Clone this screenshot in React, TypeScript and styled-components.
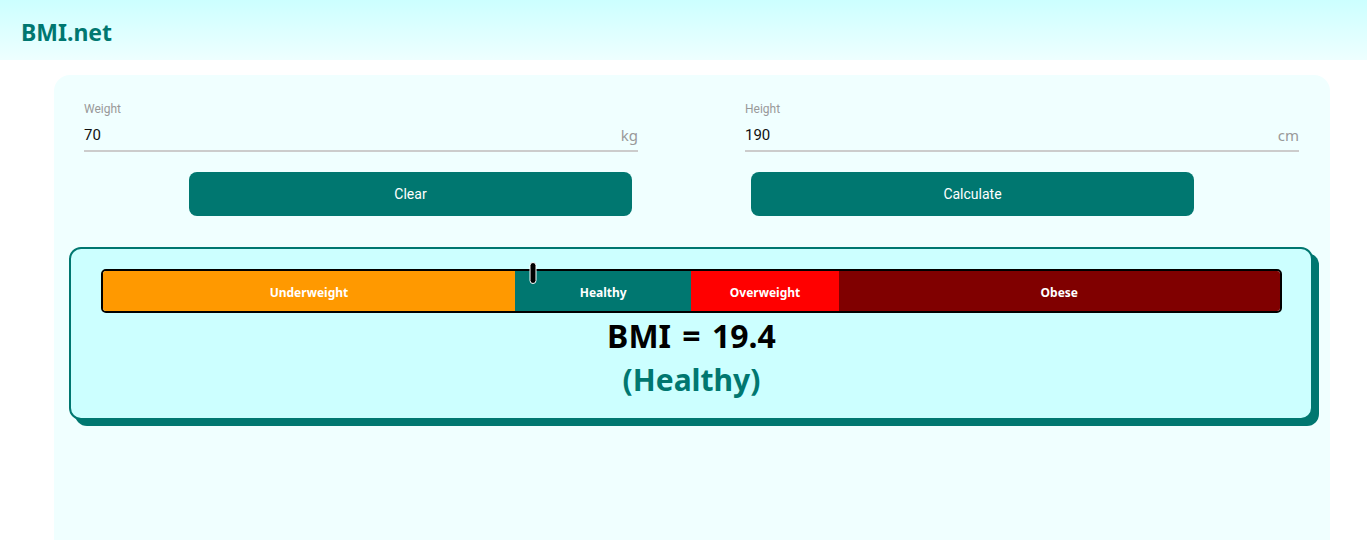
import styled, { createGlobalStyle } from 'styled-components';

const GlobalStyle = createGlobalStyle`
  html, body {
    margin: 0;
    padding: 0;
    background: #ffffff;
    font-family: "Noto Sans", "Open Sans", sans-serif;
  }
`;

const Header = styled.header`
  height: 60px;
  display: flex;
  align-items: center;
  padding-left: 21px;
  background: linear-gradient(to bottom, #ccffff, #eeffff);
`;

const Logo = styled.h1`
  margin: 0;
  font-size: 23px;
  font-weight: 700;
  color: #007770;
  padding-top: 4px;
`;

const Main = styled.main`
  margin: 15px 0 0 54px;
  width: 1276px;
  min-height: 480px;
  box-sizing: border-box;
  padding: 26px 31px 40px 30px;
  background: #f0ffff;
  border-radius: 16px;
`;

const Fields = styled.div`
  display: grid;
  grid-template-columns: 554px 554px;
  column-gap: 107px;
`;

const Field = styled.div`
  display: flex;
  flex-direction: column;
  font-family: Roboto, sans-serif;
`;

const Label = styled.label`
  font-size: 12px;
  color: #999;
  height: 18px;
  line-height: 16px;
`;

const InputRow = styled.div`
  display: flex;
  align-items: center;
  justify-content: space-between;
  height: 31px;
  border-bottom: 2px solid #cccccc;
`;

const Value = styled.span`
  font-size: 15px;
  color: #111;
`;

const Unit = styled.span`
  font-family: "Noto Sans", sans-serif;
  font-size: 15px;
  color: #999;
`;

const Buttons = styled.div`
  display: flex;
  gap: 119px;
  margin: 20px 0 0 105px;
`;

const Button = styled.button`
  width: 443px;
  height: 44px;
  border: none;
  border-radius: 8px;
  background: #007770;
  color: #ffffff;
  font-family: Roboto, sans-serif;
  font-size: 14px;
`;

const Result = styled.section`
  margin: 31px 0 0 -15px;
  width: 1244px;
  height: 173px;
  box-sizing: border-box;
  padding: 20px 29px 0 30px;
  background: #ccffff;
  border: 2px solid #007770;
  border-radius: 12px;
  box-shadow: 6px 6px 0 #007770;
  text-align: center;
`;

const Scale = styled.div`
  position: relative;
  display: flex;
  height: 44px;
  box-sizing: border-box;
  border: 2px solid #000;
  border-radius: 5px;
`;

const Segment = styled.div<{ $bg: string; $w: number; $first?: boolean; $last?: boolean }>`
  flex: 0 0 ${p => p.$w}%;
  display: flex;
  align-items: center;
  justify-content: center;
  background: ${p => p.$bg};
  color: #ffffff;
  font-size: 12px;
  font-weight: 700;
  padding-top: 2px;
  border-radius: ${p => (p.$first ? '3px 0 0 3px' : p.$last ? '0 3px 3px 0' : '0')};
`;

const Marker = styled.div`
  position: absolute;
  top: -9px;
  width: 5px;
  height: 20px;
  background: #000;
  border: 1px solid #fff;
  border-radius: 4px;
  transform: translateX(-50%);
`;

const BmiValue = styled.div`
  margin-top: 1px;
  font-size: 32px;
  font-weight: 700;
  color: #000;
  line-height: 44px;
  word-spacing: 3px;
`;

const Category = styled.div`
  font-size: 30px;
  font-weight: 700;
  color: #007770;
  line-height: 44px;
`;

const segments = [
  { label: 'Underweight', bg: '#ff9900', w: 35 },
  { label: 'Healthy', bg: '#007770', w: 15 },
  { label: 'Overweight', bg: '#ff0000', w: 12.5 },
  { label: 'Obese', bg: '#800000', w: 37.5 },
];

export default function App() {
  const markerPos = 36.5;

  return (
    <>
      <GlobalStyle />
      <Header>
        <Logo>BMI.net</Logo>
      </Header>
      <Main>
        <Fields>
          <Field>
            <Label>Weight</Label>
            <InputRow>
              <Value>70</Value>
              <Unit>kg</Unit>
            </InputRow>
          </Field>
          <Field>
            <Label>Height</Label>
            <InputRow>
              <Value>190</Value>
              <Unit>cm</Unit>
            </InputRow>
          </Field>
        </Fields>
        <Buttons>
          <Button>Clear</Button>
          <Button>Calculate</Button>
        </Buttons>
        <Result>
          <Scale>
            {segments.map((s, i) => (
              <Segment
                key={s.label}
                $bg={s.bg}
                $w={s.w}
                $first={i === 0}
                $last={i === segments.length - 1}
              >
                {s.label}
              </Segment>
            ))}
            <Marker style={{ left: `${markerPos}%` }} />
          </Scale>
          <BmiValue>BMI = 19.4</BmiValue>
          <Category>(Healthy)</Category>
        </Result>
      </Main>
    </>
  );
}
